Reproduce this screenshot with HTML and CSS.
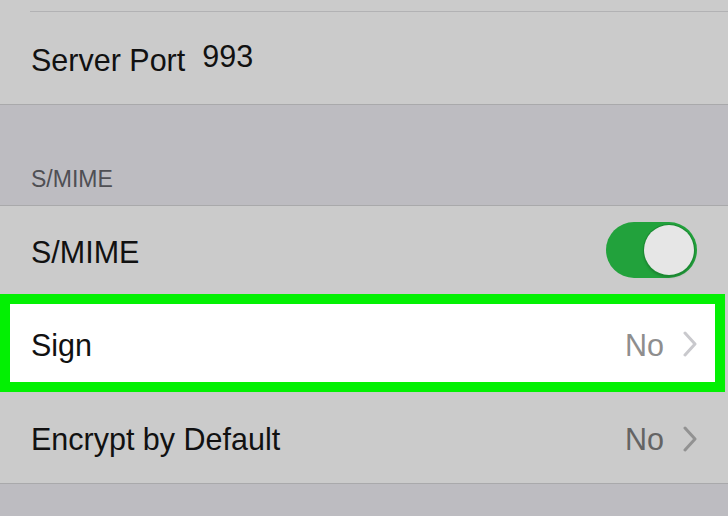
FILE: index.html
```html
<!DOCTYPE html>
<html>
<head>
<meta charset="utf-8">
<link rel="stylesheet" href="styles.css">
</head>
<body>
<div class="page">
  <div class="group">
    <div class="stub"></div>
    <div class="sep-inset"></div>
    <div class="row">
      <span class="label">Server Port</span>
      <span class="field">993</span>
    </div>
  </div>
  <div class="section-header">S/MIME</div>
  <div class="group">
    <div class="row row-smime">
      <span class="label">S/MIME</span>
      <span class="switch"><span class="knob"></span></span>
    </div>
    <div class="row row-sign">
      <span class="label">Sign</span>
      <span class="detail">No</span>
      <svg class="chev" width="14" height="26" viewBox="0 0 14 26"><polyline points="2,2 12,13 2,24" fill="none" stroke-width="3" stroke-linecap="round" stroke-linejoin="round"/></svg>
    </div>
    <div class="row row-encrypt">
      <span class="label">Encrypt by Default</span>
      <span class="detail">No</span>
      <svg class="chev" width="14" height="26" viewBox="0 0 14 26"><polyline points="2,2 12,13 2,24" fill="none" stroke-width="3" stroke-linecap="round" stroke-linejoin="round"/></svg>
    </div>
  </div>
  <div class="footer"></div>
</div>
</body>
</html>
```
FILE: styles.css
```css
html, body {
  margin: 0;
  padding: 0;
  background: #bdbcc1;
}
.page {
  width: 728px;
  height: 516px;
  overflow: hidden;
  font-family: "Liberation Sans", Arial, sans-serif;
  color: #111;
}
.group {
  background: #cbcbcb;
  border-bottom: 1px solid #a9a9ab;
}
.stub {
  height: 11px;
}
.sep-inset {
  height: 1px;
  margin-left: 30px;
  background: #b2b2b4;
}
.row {
  display: flex;
  align-items: center;
  box-sizing: border-box;
  height: 92px;
  padding: 4px 31px 0;
  font-size: 30.5px;
  line-height: 1;
}
.label {
  flex: none;
}
.field {
  margin-left: 17px;
  position: relative;
  top: -4px;
}
.section-header {
  height: 101px;
  box-sizing: border-box;
  padding: 0 31px 12px;
  display: flex;
  align-items: flex-end;
  font-size: 23px;
  color: #4f4f54;
  border-bottom: 1px solid #a9a9ab;
}
.row-smime {
  height: 88px;
  padding-top: 0;
  justify-content: space-between;
}
.row-smime .label {
  position: relative;
  top: 2px;
}
.switch {
  width: 91px;
  height: 56px;
  border-radius: 28px;
  background: #22a23c;
  display: flex;
  align-items: center;
  justify-content: flex-end;
  padding-right: 3px;
  box-sizing: border-box;
}
.knob {
  width: 50px;
  height: 50px;
  border-radius: 50%;
  background: #e6e6e6;
  box-shadow: 0 0 0 1px #1c8a33, 0 2px 3px rgba(0,0,0,0.25);
}
.row-sign {
  height: 98px;
  margin-right: 3px;
  border: 10px solid #03f003;
  background: #ffffff;
  padding: 4px 18px 0 21px;
}
.row-encrypt {
  height: 91px;
}
.detail {
  margin-left: auto;
  color: #8e8e8e;
}
.chev {
  margin-left: 19px;
  stroke: #c9c9cd;
  position: relative;
  top: -1px;
}
.row-encrypt .detail {
  color: #646464;
}
.row-encrypt .chev {
  stroke: #929292;
}
.footer {
  height: 40px;
}
```
